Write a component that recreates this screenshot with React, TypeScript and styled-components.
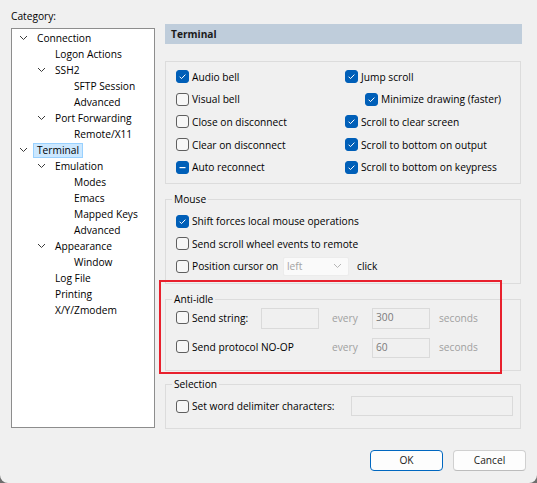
import React from 'react';
import styled, { createGlobalStyle } from 'styled-components';

const Global = createGlobalStyle`
  html, body { margin: 0; padding: 0; background: #6e6e6e; }
  body { font-family: "Open Sans", "Noto Sans", sans-serif; font-size: 10.2px; color: #000; }
  #root { width: 537px; height: 483px; }
`;

const Window = styled.div`
  width: 537px;
  height: 483px;
  box-sizing: border-box;
  background: #f0f0f0;
  border-radius: 0 0 8px 8px;
  padding: 9px 11px 0 11px;
  display: flex;
  flex-direction: column;
`;

const Main = styled.div`
  display: flex;
  gap: 10px;
  align-items: flex-start;
`;

const LeftCol = styled.div`
  width: 144px;
  display: flex;
  flex-direction: column;
`;

const Caption = styled.div`
  height: 14px;
  line-height: 14px;
`;

const Tree = styled.div`
  margin-top: 5px;
  height: 400px;
  box-sizing: border-box;
  border: 1px solid #8d8d8d;
  background: #fff;
  padding-top: 1px;
`;

const TreeRow = styled.div<{ $level: number }>`
  height: 16px;
  display: flex;
  align-items: center;
  padding-left: ${(p) => [6, 24, 43][p.$level]}px;
`;

const Chevron = styled.span`
  flex: none;
  width: 19px;
  height: 16px;
  display: flex;
  align-items: center;
`;

const TreeLabel = styled.span<{ $selected?: boolean }>`
  margin-left: -4px;
  padding: 0 3px;
  height: 13px;
  line-height: 13px;
  white-space: nowrap;
  border: 1px solid ${(p) => (p.$selected ? '#99d1ff' : 'transparent')};
  background: ${(p) => (p.$selected ? '#cce8ff' : 'transparent')};
`;

const RightCol = styled.div`
  width: 357px;
  padding-top: 15px;
  display: flex;
  flex-direction: column;
`;

const Header = styled.div`
  height: 20px;
  line-height: 20px;
  background: #bfcddb;
  padding-left: 6px;
  font-weight: 700;
  color: #1a1a1a;
`;

const Group = styled.fieldset<{ $h: number; $mt: number; $pad: string }>`
  margin: ${(p) => p.$mt}px 0 0 0;
  min-width: 0;
  width: 356px;
  height: ${(p) => p.$h}px;
  box-sizing: border-box;
  border: 1px solid #dcdcdc;
  padding: ${(p) => p.$pad};
`;

const Legend = styled.legend`
  padding: 0 2px;
  margin-left: -4px;
  height: 14px;
  line-height: 14px;
`;

const OptionsGrid = styled.div`
  display: grid;
  grid-template-columns: 169px 1fr;
  grid-template-rows: repeat(5, 22.6px);
  grid-auto-flow: column;
`;

const RowStack = styled.div`
  display: grid;
  grid-auto-rows: 22.5px;
`;

const CheckRow = styled.label<{ $indent?: number }>`
  display: flex;
  align-items: center;
  gap: 3px;
  padding-left: ${(p) => p.$indent ?? 0}px;
  white-space: nowrap;
  line-height: 14px;
`;

const FixedText = styled.span<{ $w: number }>`
  width: ${(p) => p.$w}px;
  flex: none;
`;

const Box = styled.span<{ $s: 'on' | 'off' | 'mixed' }>`
  flex: none;
  width: 13px;
  height: 13px;
  box-sizing: border-box;
  border-radius: 3px;
  border: 1px solid ${(p) => (p.$s === 'off' ? '#5f5f5f' : '#005fb8')};
  background: ${(p) => (p.$s === 'off' ? '#f7f7f7' : '#005fb8')};
  display: flex;
  align-items: center;
  justify-content: center;
`;

const Dropdown = styled.div`
  width: 66px;
  height: 19px;
  box-sizing: border-box;
  background: #fafafa;
  border: 1px solid #ececec;
  border-radius: 2px;
  display: flex;
  align-items: center;
  justify-content: space-between;
  padding: 0 6px 0 3px;
  color: #a3a3a3;
`;

const After = styled.span`
  margin-left: 5px;
`;

const AntiGrid = styled.div`
  display: grid;
  grid-template-columns: 85px 71px 40px 67px 1fr;
  grid-template-rows: 21px 21px;
  row-gap: 8px;
  align-items: center;
`;

const AntiCell = styled.div<{ $span?: number }>`
  grid-column: span ${(p) => p.$span ?? 1};
  margin-bottom: 2px;
`;

const Dim = styled.span`
  color: #a0a0a0;
`;

const Field = styled.div<{ $w: number; $h: number }>`
  width: ${(p) => p.$w}px;
  height: ${(p) => p.$h}px;
  box-sizing: border-box;
  border: 1px solid #dadada;
  background: #f0f0f0;
  color: #7a7a7a;
  padding-left: 3px;
  line-height: ${(p) => p.$h - 4}px;
`;

const Highlighted = styled.div`
  position: relative;
  margin-top: 8px;
`;

const RedBox = styled.div`
  position: absolute;
  left: -6px;
  top: -12px;
  width: 343px;
  height: 94px;
  box-sizing: border-box;
  border: 2px solid #e8202d;
  pointer-events: none;
`;

const SelectionRow = styled.div`
  display: grid;
  grid-template-columns: 175px 162px;
  height: 20px;
  align-items: center;
`;

const Footer = styled.div`
  margin-top: 21px;
  display: flex;
  justify-content: flex-end;
  gap: 10px;
`;

const Button = styled.button<{ $default?: boolean }>`
  width: 73px;
  height: 21px;
  box-sizing: border-box;
  font: inherit;
  color: #1a1a1a;
  background: #fdfdfd;
  border: 1px solid ${(p) => (p.$default ? '#0067c0' : '#d0d0d0')};
  border-bottom-color: ${(p) => (p.$default ? '#0067c0' : '#bcbcbc')};
  border-radius: 4px;
  padding: 0;
  line-height: 19px;
`;

type CS = 'on' | 'off' | 'mixed';

const Checkbox = ({ s }: { s: CS }) => (
  <Box $s={s}>
    {s === 'on' && (
      <svg width="11" height="11" viewBox="0 0 11 11">
        <path d="M2.6 5.7 L4.5 7.6 L8.4 3.6" fill="none" stroke="#fff" strokeWidth="1" />
      </svg>
    )}
    {s === 'mixed' && (
      <svg width="11" height="11" viewBox="0 0 11 11">
        <rect x="2.5" y="5" width="6" height="1.2" fill="#fff" />
      </svg>
    )}
  </Box>
);

const Check = ({ s, children, indent }: { s: CS; children: React.ReactNode; indent?: number }) => (
  <CheckRow $indent={indent}>
    <Checkbox s={s} />
    <span>{children}</span>
  </CheckRow>
);

const ChevronDown = ({ color = '#3a3a3a' }: { color?: string }) => (
  <svg width="9" height="6" viewBox="0 0 9 6" style={{ marginLeft: 1 }}>
    <path d="M1 1 L4.5 4.5 L8 1" fill="none" stroke={color} strokeWidth="1" />
  </svg>
);

const treeItems: { label: string; level: number; open?: boolean; selected?: boolean }[] = [
  { label: 'Connection', level: 0, open: true },
  { label: 'Logon Actions', level: 1 },
  { label: 'SSH2', level: 1, open: true },
  { label: 'SFTP Session', level: 2 },
  { label: 'Advanced', level: 2 },
  { label: 'Port Forwarding', level: 1, open: true },
  { label: 'Remote/X11', level: 2 },
  { label: 'Terminal', level: 0, open: true, selected: true },
  { label: 'Emulation', level: 1, open: true },
  { label: 'Modes', level: 2 },
  { label: 'Emacs', level: 2 },
  { label: 'Mapped Keys', level: 2 },
  { label: 'Advanced', level: 2 },
  { label: 'Appearance', level: 1, open: true },
  { label: 'Window', level: 2 },
  { label: 'Log File', level: 1 },
  { label: 'Printing', level: 1 },
  { label: 'X/Y/Zmodem', level: 1 },
];

export default function App() {
  return (
    <>
      <Global />
      <Window>
        <Main>
          <LeftCol>
            <Caption>Category:</Caption>
            <Tree>
              {treeItems.map((it, i) => (
                <TreeRow key={i} $level={it.level}>
                  <Chevron>{it.open && <ChevronDown />}</Chevron>
                  <TreeLabel $selected={it.selected}>{it.label}</TreeLabel>
                </TreeRow>
              ))}
            </Tree>
          </LeftCol>
          <RightCol>
            <Header>Terminal</Header>
            <Group $h={123} $mt={17} $pad="3.5px 10px 0 10px">
              <OptionsGrid>
                <Check s="on">Audio bell</Check>
                <Check s="off">Visual bell</Check>
                <Check s="off">Close on disconnect</Check>
                <Check s="off">Clear on disconnect</Check>
                <Check s="mixed">Auto reconnect</Check>
                <Check s="on">Jump scroll</Check>
                <Check s="on" indent={20}>Minimize drawing (faster)</Check>
                <Check s="on">Scroll to clear screen</Check>
                <Check s="on">Scroll to bottom on output</Check>
                <Check s="on">Scroll to bottom on keypress</Check>
              </OptionsGrid>
            </Group>
            <Group $h={92} $mt={8} $pad="4px 10px 0 10px">
              <Legend>Mouse</Legend>
              <RowStack>
                <Check s="on">Shift forces local mouse operations</Check>
                <Check s="off">Send scroll wheel events to remote</Check>
                <CheckRow>
                  <Checkbox s="off" />
                  <FixedText $w={88}>Position cursor on</FixedText>
                  <Dropdown>
                    <span>left</span>
                    <ChevronDown color="#b5b5b5" />
                  </Dropdown>
                  <After>click</After>
                </CheckRow>
              </RowStack>
            </Group>
            <Highlighted>
              <Group $h={79} $mt={0} $pad="2px 10px 0 10px">
                <Legend>Anti-idle</Legend>
                <AntiGrid>
                  <AntiCell>
                    <Check s="off">Send string:</Check>
                  </AntiCell>
                  <Field $w={58} $h={21} />
                  <AntiCell><Dim>every</Dim></AntiCell>
                  <Field $w={58} $h={21}>300</Field>
                  <AntiCell><Dim>seconds</Dim></AntiCell>
                  <AntiCell $span={2}>
                    <Check s="off">Send protocol NO-OP</Check>
                  </AntiCell>
                  <AntiCell><Dim>every</Dim></AntiCell>
                  <Field $w={58} $h={20}>60</Field>
                  <AntiCell><Dim>seconds</Dim></AntiCell>
                </AntiGrid>
              </Group>
              <RedBox />
            </Highlighted>
            <Group $h={52} $mt={6} $pad="5px 10px 0 10px">
              <Legend>Selection</Legend>
              <SelectionRow>
                <Check s="off">Set word delimiter characters:</Check>
                <Field $w={162} $h={20} />
              </SelectionRow>
            </Group>
          </RightCol>
        </Main>
        <Footer>
          <Button $default>OK</Button>
          <Button>Cancel</Button>
        </Footer>
      </Window>
    </>
  );
}
